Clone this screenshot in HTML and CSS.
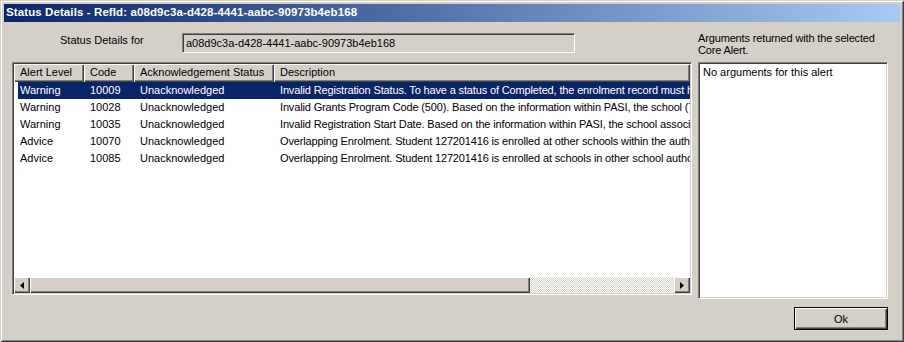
FILE: index.html
```html
<!DOCTYPE html>
<html lang="en">
<head>
  <meta charset="UTF-8" />
  <title>Status Details</title>
  <link rel="stylesheet" href="styles.css">
</head>
<body>

<div class="window">
  <div class="titlebar">Status Details - RefId: a08d9c3a-d428-4441-aabc-90973b4eb168</div>

  <div class="content">
    <div class="top-row">
      <div class="field-label">Status Details for</div>
      <div class="field-input">a08d9c3a-d428-4441-aabc-90973b4eb168</div>
    </div>

    <div class="args-label">Arguments returned with the selected<br/>Core Alert.</div>

    <div class="listview">
      <div class="lv-head">
        <div class="hcell c-level">Alert Level</div>
        <div class="hcell c-code">Code</div>
        <div class="hcell c-ack">Acknowledgement Status</div>
        <div class="hcell c-desc">Description</div>
      </div>

      <div class="lv-body">
        <div class="lv-row selected">
          <div class="cell c-level">Warning</div>
          <div class="cell c-code">10009</div>
          <div class="cell c-ack">Unacknowledged</div>
          <div class="cell c-desc">Invalid Registration Status. To have a status of Completed, the enrolment record must have a valid exit date and exit reason.</div>
        </div>
        <div class="lv-row">
          <div class="cell c-level">Warning</div>
          <div class="cell c-code">10028</div>
          <div class="cell c-ack">Unacknowledged</div>
          <div class="cell c-desc">Invalid Grants Program Code (500). Based on the information within PASI, the school (7324) is not eligible for this program.</div>
        </div>
        <div class="lv-row">
          <div class="cell c-level">Warning</div>
          <div class="cell c-code">10035</div>
          <div class="cell c-ack">Unacknowledged</div>
          <div class="cell c-desc">Invalid Registration Start Date. Based on the information within PASI, the school association is not valid for this date.</div>
        </div>
        <div class="lv-row">
          <div class="cell c-level">Advice</div>
          <div class="cell c-code">10070</div>
          <div class="cell c-ack">Unacknowledged</div>
          <div class="cell c-desc">Overlapping Enrolment. Student 127201416 is enrolled at other schools within the authority for the same period.</div>
        </div>
        <div class="lv-row">
          <div class="cell c-level">Advice</div>
          <div class="cell c-code">10085</div>
          <div class="cell c-ack">Unacknowledged</div>
          <div class="cell c-desc">Overlapping Enrolment. Student 127201416 is enrolled at schools in other school authorities for the same period.</div>
        </div>
      </div>

      <div class="hscroll">
        <div class="sb-btn">
          <svg width="4" height="7" viewBox="0 0 4 7"><path d="M4 0 L0 3.5 L4 7 Z" fill="#000"/></svg>
        </div>
        <div class="sb-thumb"></div>
        <div class="sb-track"></div>
        <div class="sb-btn">
          <svg width="4" height="7" viewBox="0 0 4 7"><path d="M0 0 L4 3.5 L0 7 Z" fill="#000"/></svg>
        </div>
      </div>
    </div>

    <div class="args-box">No arguments for this alert</div>

    <div class="actions">
      <button class="btn-ok">Ok</button>
    </div>
  </div>
</div>

</body>
</html>
```

FILE: styles.css
```css
* {
  box-sizing: border-box;
}

body {
  margin: 0;
  font-family: "Liberation Sans", Arial, sans-serif;
  font-size: 11px;
  color: #000;
  background: #d4d0c8;
}

.window {
  width: 904px;
  height: 342px;
  padding: 4px;
  background: #d4d0c8;
  box-shadow: inset 1px 1px #d4d0c8, inset -1px -1px #404040,
              inset 2px 2px #fff, inset -2px -2px #808080;
}

.titlebar {
  height: 18px;
  line-height: 17px;
  padding-left: 2px;
  color: #fff;
  font-weight: bold;
  font-size: 11.5px;
  letter-spacing: 0.1px;
  background: linear-gradient(to right, #0a246a, #a6caf0);
  white-space: nowrap;
}

.content {
  display: grid;
  grid-template-columns: 680px 190px;
  grid-template-rows: 29px auto auto;
  column-gap: 6px;
  padding: 11px 12px 0 8px;
}

/* top row */
.top-row {
  display: flex;
  align-items: flex-start;
}

.field-label {
  width: 170px;
  padding: 1px 0 0 48px;
  line-height: 13px;
}

.field-input {
  width: 393px;
  height: 20px;
  padding: 3px 0 0 3px;
  line-height: 13px;
  border: 1px solid;
  border-color: #808080 #fff #fff #808080;
  box-shadow: inset 1px 1px #404040, inset -1px -1px #d4d0c8;
}

.args-label {
  margin-top: -1px;
  line-height: 12px;
  letter-spacing: -0.15px;
}

/* list view */
.listview {
  height: 233px;
  display: flex;
  flex-direction: column;
  background: #fff;
  border: 1px solid;
  border-color: #808080 #fff #fff #808080;
  box-shadow: inset 1px 1px #404040, inset -1px -1px #d4d0c8;
  padding: 1px;
  overflow: hidden;
}

.lv-head {
  display: flex;
  height: 18px;
  flex: none;
  background: #d4d0c8;
}

.hcell {
  line-height: 17px;
  padding-left: 6px;
  white-space: nowrap;
  box-shadow: inset 1px 1px #fff, inset -1px -1px #404040, inset -2px -2px #808080;
}

.lv-head .c-level { width: 70px; }
.lv-head .c-code { width: 50px; }
.lv-head .c-ack { width: 140px; }
.lv-head .c-desc { flex: 1; }

.lv-body {
  flex: 1;
}

.lv-row {
  display: flex;
  height: 17px;
  line-height: 17px;
  margin-left: 4px;
  white-space: nowrap;
}

.lv-row.selected {
  background: #0a246a;
  color: #fff;
}

.cell {
  padding-left: 6px;
  overflow: hidden;
}

.lv-row .c-level { width: 66px; padding-left: 2px; }
.lv-row .c-code { width: 50px; }
.lv-row .c-ack { width: 140px; }
.lv-row .c-desc { flex: 1; letter-spacing: -0.15px; }

/* horizontal scrollbar */
.hscroll {
  display: flex;
  height: 16px;
  flex: none;
}

.sb-btn,
.sb-thumb {
  background: #d4d0c8;
  box-shadow: inset 1px 1px #fff, inset -1px -1px #404040, inset -2px -2px #808080;
}

.sb-btn {
  width: 16px;
  display: flex;
  align-items: center;
  justify-content: center;
}

.sb-thumb {
  width: 500px;
}

.sb-track {
  flex: 1;
  background: repeating-conic-gradient(#fff 0 25%, #d4d0c8 0 50%) 0 0 / 2px 2px;
}

/* arguments box */
.args-box {
  height: 237px;
  padding: 3px 0 0 4px;
  background: #fff;
  border: 1px solid;
  border-color: #808080 #fff #fff #808080;
  box-shadow: inset 1px 1px #404040, inset -1px -1px #d4d0c8;
}

.actions {
  grid-column: 1 / 3;
  display: flex;
  justify-content: flex-end;
  margin-top: 8px;
}

.btn-ok {
  width: 94px;
  height: 23px;
  font-family: inherit;
  font-size: 11px;
  background: #d4d0c8;
  border: 1px solid #000;
  box-shadow: inset 1px 1px #fff, inset -1px -1px #404040, inset -2px -2px #808080;
  padding: 0;
}
```
